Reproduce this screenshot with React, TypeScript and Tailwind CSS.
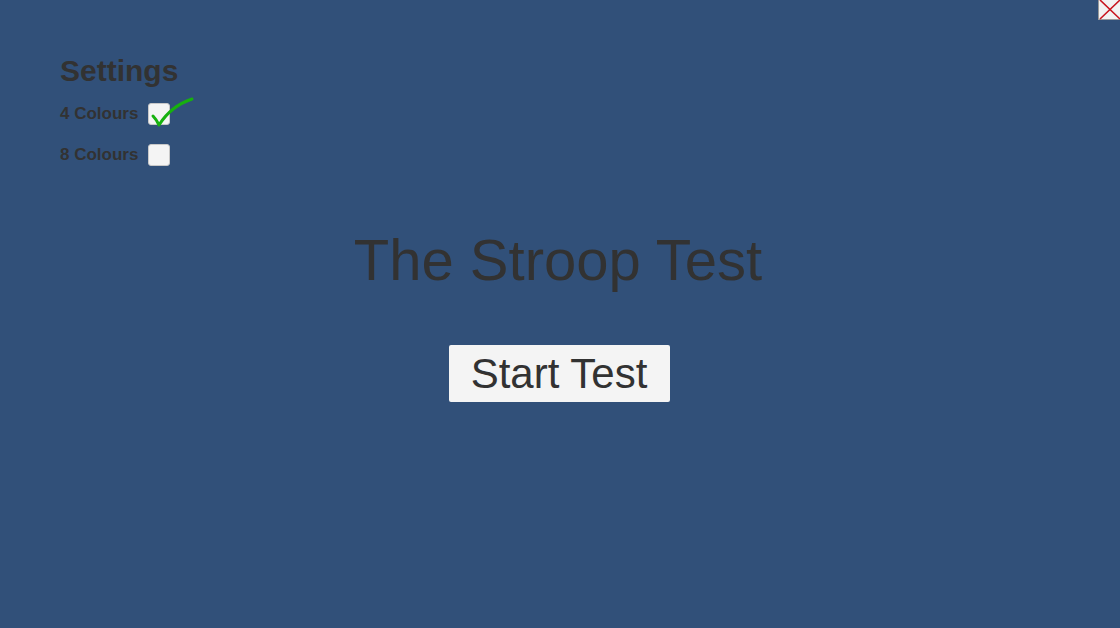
import { useState } from "react"

const font = { fontFamily: '"Liberation Sans", Arial, sans-serif' }

function Tick() {
    return (
        <svg
            className="absolute left-0 top-[-8px] pointer-events-none"
            width="46"
            height="34"
            viewBox="0 0 46 34"
            fill="none"
        >
            <path
                d="M4 20 Q7 23 10 29 Q22 10 43 3"
                stroke="#17b10f"
                strokeWidth="3"
                strokeLinecap="round"
                strokeLinejoin="round"
            />
        </svg>
    )
}

function Option({ label, checked, onClick }: { label: string; checked: boolean; onClick: () => void }) {
    return (
        <div className="flex items-center gap-[10px] h-[22px]">
            <span className="text-[17px] font-bold text-[#323232]">{label}</span>
            <button
                onClick={onClick}
                className="relative w-[22px] h-[22px] rounded-[3px] bg-[#f4f4f4] border border-[#c8c8c8]"
            >
                {checked && <Tick />}
            </button>
        </div>
    )
}

export default function App() {
    const [colours, setColours] = useState(4)

    return (
        <div className="relative w-full h-[628px] bg-[#315079] overflow-hidden" style={font}>
            {/* close */}
            <button className="absolute top-0 right-0 w-[22px] h-[20px] bg-[#f2f2f2] border-l border-b border-[#9a9a9a]">
                <svg width="22" height="20" viewBox="0 0 22 20" className="block">
                    <path d="M1 0 L21 19 M21 0 L1 19" stroke="#c8141e" strokeWidth="1.6" />
                </svg>
            </button>

            {/* settings */}
            <div className="pt-[54px] pl-[60px] flex flex-col">
                <h2 className="text-[30px] font-bold text-[#323232] leading-[34px]">Settings</h2>
                <div className="mt-[15px] flex flex-col gap-[19px]">
                    <Option label="4 Colours" checked={colours === 4} onClick={() => setColours(4)} />
                    <Option label="8 Colours" checked={colours === 8} onClick={() => setColours(8)} />
                </div>
            </div>

            {/* main */}
            <div className="flex flex-col items-center mt-[61px]">
                <h1 className="text-[58px] text-[#323232] leading-[66px] -translate-x-[2px]">The Stroop Test</h1>
                <button className="mt-[52px] w-[221px] h-[57px] bg-[#f4f4f4] rounded-[2px] text-[42px] text-[#323232] leading-none -translate-x-[1px]">
                    Start Test
                </button>
            </div>
        </div>
    )
}
